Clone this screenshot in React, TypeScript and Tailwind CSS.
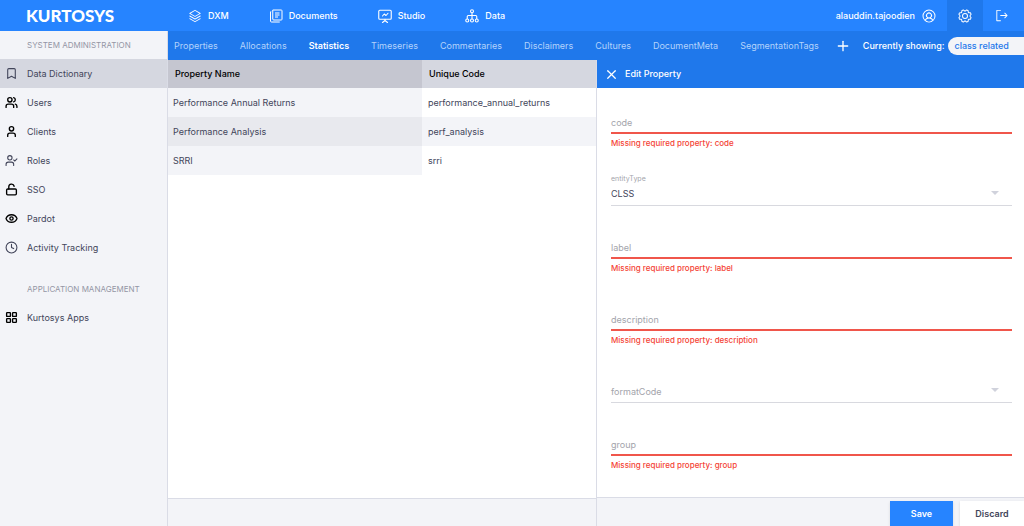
import { type ComponentType, type ReactNode } from 'react'
import { PiGear, PiSignOut, PiStack, PiUserCircle } from 'react-icons/pi'
import { Bookmark, Clock, Eye, LayoutGrid, LockOpen, Plus, User, UserCheck, Users, X } from 'lucide-react'

interface IconProps {
  className?: string
}

interface MenuItem {
  label: string
  icon: ComponentType<IconProps>
  active?: boolean
  light?: boolean
}

type Field =
  | { kind: 'text'; name: string }
  | { kind: 'select'; name: string; value?: string }

function DocumentsIcon({ className }: IconProps) {
  return (
    <svg viewBox="0 0 28 28" fill="none" stroke="currentColor" strokeWidth="2" className={className}>
      <path d="M7.500 2h17a1.500 1.500 0 0 1 1.500 1.500v17a1.500 1.500 0 0 1-1.500 1.500h-15a2 2 0 0 1-2-2V2z" strokeLinejoin="round" />
      <path d="M4.500 5.500h-1.500v18.500a2 2 0 0 0 2 2h16.500" />
      <path d="M12 8h9M12 12h9M12 16h6" />
    </svg>
  )
}

function StudioIcon({ className }: IconProps) {
  return (
    <svg
      viewBox="0 0 28 28"
      fill="none"
      stroke="currentColor"
      strokeWidth="2.2"
      strokeLinecap="round"
      strokeLinejoin="round"
      className={className}
    >
      <rect x="1.500" y="2.500" width="25" height="18" rx="2" />
      <path d="M9 14l3.500-4 3.500 3 4-4.500" />
      <path d="M14 20.500v3M9 27l5-4 5 4" />
    </svg>
  )
}

function DataIcon({ className }: IconProps) {
  return (
    <svg viewBox="0 0 28 28" fill="none" stroke="currentColor" strokeWidth="2.2" className={className}>
      <circle cx="14" cy="4.500" r="3" />
      <path d="M14 7.500V20M4.500 20v-5a2 2 0 0 1 2-2h15a2 2 0 0 1 2 2v5" />
      <circle cx="4.500" cy="23" r="3" />
      <circle cx="14" cy="23" r="3" />
      <circle cx="23.500" cy="23" r="3" />
    </svg>
  )
}

const PRODUCTS: MenuItem[] = [
  { label: 'DXM', icon: PiStack },
  { label: 'Documents', icon: DocumentsIcon },
  { label: 'Studio', icon: StudioIcon },
  { label: 'Data', icon: DataIcon },
]

const SYSTEM_ITEMS: MenuItem[] = [
  { label: 'Data Dictionary', icon: Bookmark, active: true, light: true },
  { label: 'Users', icon: Users },
  { label: 'Clients', icon: User },
  { label: 'Roles', icon: UserCheck, light: true },
  { label: 'SSO', icon: LockOpen },
  { label: 'Pardot', icon: Eye },
  { label: 'Activity Tracking', icon: Clock, light: true },
]

const APP_ITEMS: MenuItem[] = [{ label: 'Kurtosys Apps', icon: LayoutGrid }]

const TABS = [
  'Properties',
  'Allocations',
  'Statistics',
  'Timeseries',
  'Commentaries',
  'Disclaimers',
  'Cultures',
  'DocumentMeta',
  'SegmentationTags',
]

const ROWS = [
  { name: 'Performance Annual Returns', code: 'performance_annual_returns' },
  { name: 'Performance Analysis', code: 'perf_analysis' },
  { name: 'SRRI', code: 'srri' },
]

const FIELDS: Field[] = [
  { kind: 'text', name: 'code' },
  { kind: 'select', name: 'entityType', value: 'CLSS' },
  { kind: 'text', name: 'label' },
  { kind: 'text', name: 'description' },
  { kind: 'select', name: 'formatCode' },
  { kind: 'text', name: 'group' },
]

function TopBar() {
  return (
    <header className="flex h-[31px] shrink-0 items-center bg-[#2684ff] text-white">
      <a href="#" className="w-[188px] shrink-0 pl-[26px] font-['Lato',sans-serif] text-[17px] leading-5 font-black">
        KURTOSYS
      </a>
      <nav className="flex gap-10">
        {PRODUCTS.map(({ label, icon: Icon }) => (
          <a key={label} href="#" className="flex items-center gap-1.5 font-medium">
            <Icon className="size-3.5" />
            {label}
          </a>
        ))}
      </nav>
      <div className="ml-auto flex h-full items-center">
        <button type="button" className="flex items-center gap-1.5 pr-[10px] font-medium">
          alauddin.tajoodien
          <PiUserCircle className="size-4" />
        </button>
        <button
          type="button"
          aria-label="Settings"
          className="flex h-full w-9 items-center justify-center bg-[#1f78eb]"
        >
          <PiGear className="size-4" />
        </button>
        <button type="button" aria-label="Sign out" className="flex h-full w-[41px] items-center pl-[11px]">
          <PiSignOut className="size-[15px]" />
        </button>
      </div>
    </header>
  )
}

function MenuSection({ title, items }: { title: string; items: MenuItem[] }) {
  return (
    <section>
      <h2 className="flex h-7 items-center pl-[27px] text-[8px] text-[#9496a5]">{title}</h2>
      <ul>
        {items.map(({ label, icon: Icon, active, light }) => (
          <li key={label}>
            <a
              href="#"
              className={`flex h-[29px] items-center gap-[9px] pl-[5px] ${active ? 'bg-[#d5d7e0]' : ''}`}
            >
              <Icon className={`size-[13px] ${light ? 'stroke-2 text-[#42455a]' : 'stroke-[2.5] text-black'}`} />
              {label}
            </a>
          </li>
        ))}
      </ul>
    </section>
  )
}

function Sidebar() {
  return (
    <aside className="w-[168px] shrink-0 space-y-[13px] border-r border-[#dadce6] bg-[#f3f4f8] text-[#42455a]">
      <MenuSection title="SYSTEM ADMINISTRATION" items={SYSTEM_ITEMS} />
      <MenuSection title="APPLICATION MANAGEMENT" items={APP_ITEMS} />
    </aside>
  )
}

function TabBar() {
  return (
    <div className="flex h-[29px] shrink-0 items-center overflow-hidden bg-[#1f78eb] pl-1.5 whitespace-nowrap text-white">
      <nav className="flex gap-[22px]">
        {TABS.map((tab) => (
          <a
            key={tab}
            href="#"
            className={tab === 'Statistics' ? 'font-semibold' : 'text-[#b4d3fb]'}
          >
            {tab}
          </a>
        ))}
      </nav>
      <button type="button" aria-label="Add tab" className="ml-4">
        <Plus className="size-4" />
      </button>
      <span className="ml-3 font-medium">Currently showing:</span>
      <button
        type="button"
        className="ml-1 h-[18px] grow rounded-l-full bg-[#f3f4f8] pl-1.5 text-left font-medium text-[#1f78eb]"
      >
        class related
      </button>
    </div>
  )
}

function PropertyTable() {
  return (
    <table className="w-full table-fixed text-left text-[#42455a]">
      <thead>
        <tr className="h-7 text-black">
          <th className="w-[254px] bg-[#c5c6d0] pl-[7px] font-medium">Property Name</th>
          <th className="bg-[#d5d7e0] pl-[7px] font-medium">Unique Code</th>
        </tr>
      </thead>
      <tbody>
        {ROWS.map(({ name, code }) => (
          <tr key={code} className="group h-[29px]">
            <td className="bg-[#f3f4f8] pl-[5px] group-even:bg-[#e8e9ee]">{name}</td>
            <td className="pl-1.5 group-even:bg-[#f3f4f8]">{code}</td>
          </tr>
        ))}
      </tbody>
    </table>
  )
}

function FieldShell({ children, error }: { children: ReactNode; error?: string }) {
  return (
    <div>
      {children}
      {error && <p className="h-[19px] pt-[3px] text-[8px] leading-3 font-medium text-[#f44336]">{error}</p>}
    </div>
  )
}

function PropertyField({ field }: { field: Field }) {
  const id = `field-${field.name}`

  if (field.kind === 'text') {
    return (
      <FieldShell error={`Missing required property: ${field.name}`}>
        <div className="relative h-[37px] border-b-2 border-[#f0564b]">
          <label htmlFor={id} className="pointer-events-none absolute bottom-px left-0 text-[#a3a4ab]">
            {field.name}
          </label>
          <input id={id} type="text" className="size-full bg-transparent pt-4 outline-none" />
        </div>
      </FieldShell>
    )
  }

  return (
    <FieldShell>
      <div className="relative h-[37px] border-b border-[#d8d9df]">
        <label
          htmlFor={id}
          className={`pointer-events-none absolute left-0 text-[#a3a4ab] ${
            field.value ? 'top-1 text-[7px] leading-3' : 'bottom-0.5'
          }`}
        >
          {field.name}
        </label>
        <select
          id={id}
          defaultValue={field.value ?? ''}
          className="size-full appearance-none bg-transparent pt-3.5 text-[#42455a] outline-none"
        >
          <option value=""></option>
          <option value="CLSS">CLSS</option>
        </select>
        <svg viewBox="0 0 8 4" className="pointer-events-none absolute right-[13px] bottom-2.5 h-1 w-2 fill-[#d0d2dc]">
          <path d="M0 0h8L4 4z" />
        </svg>
      </div>
    </FieldShell>
  )
}

function EditPanel() {
  return (
    <form className="flex w-[428px] shrink-0 flex-col border-l border-[#dadce6] bg-white">
      <div className="flex h-7 shrink-0 items-center gap-1.5 bg-[#1f78eb] pl-[7px] text-white">
        <button type="button" aria-label="Close">
          <X className="size-[15px]" />
        </button>
        <h1 className="font-medium">Edit Property</h1>
      </div>
      <div className="flex min-h-0 grow flex-col gap-4 overflow-hidden pt-[9px] pr-3 pl-3.5">
        {FIELDS.map((field) => (
          <PropertyField key={field.name} field={field} />
        ))}
      </div>
      <footer className="flex h-[29px] shrink-0 justify-end gap-[7px] border-t border-[#dadce6] bg-[#f3f4f8] pt-[3px] font-semibold">
        <button type="submit" className="w-[63px] bg-[#2684ff] text-white shadow">
          Save
        </button>
        <button type="button" className="w-16 bg-white text-[#42455a] shadow">
          Discard
        </button>
      </footer>
    </form>
  )
}

export default function App() {
  return (
    <div className="flex h-screen flex-col overflow-hidden bg-white font-['Inter',sans-serif] text-[9px] leading-4">
      <TopBar />
      <div className="flex min-h-0 grow">
        <Sidebar />
        <main className="flex min-w-0 grow flex-col">
          <TabBar />
          <div className="flex min-h-0 grow">
            <div className="flex min-w-0 grow flex-col">
              <div className="grow">
                <PropertyTable />
              </div>
              <div className="h-7 shrink-0 border-t border-[#dadce6] bg-[#f3f4f8]" />
            </div>
            <EditPanel />
          </div>
        </main>
      </div>
    </div>
  )
}
